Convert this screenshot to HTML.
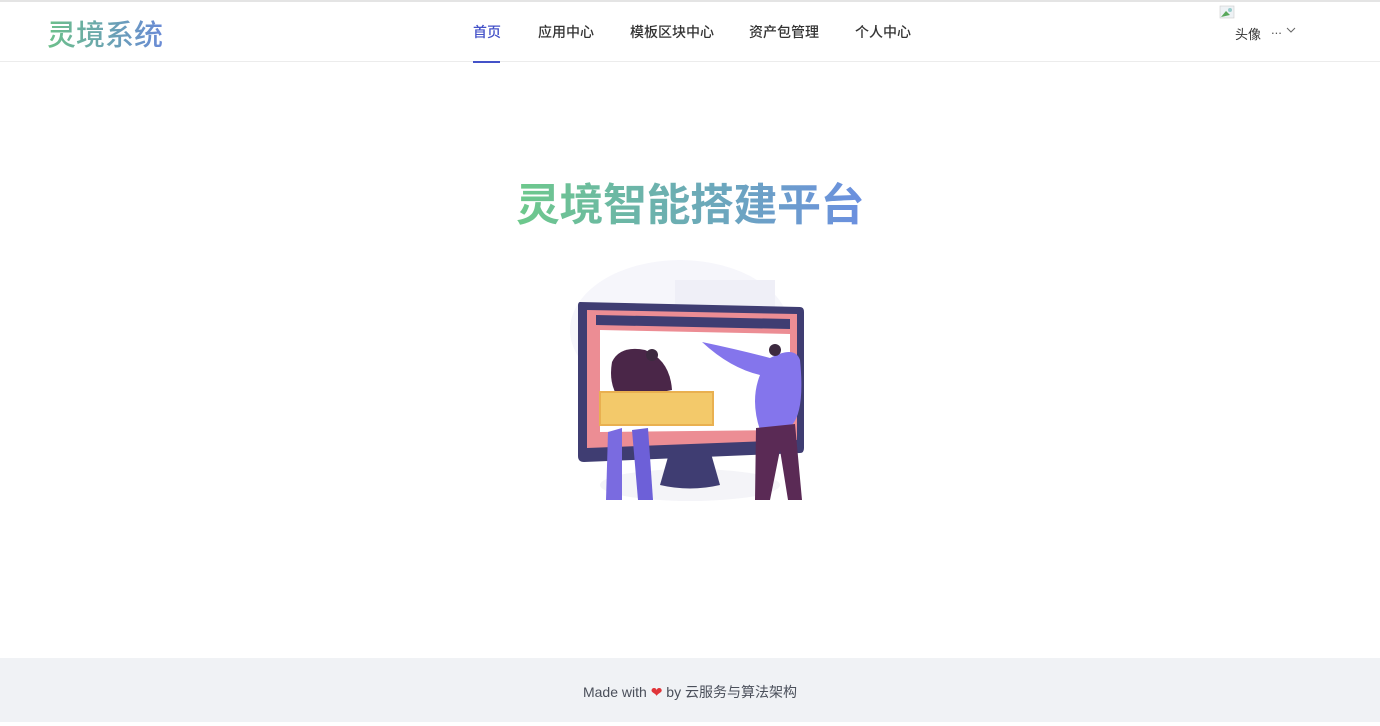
<!DOCTYPE html>
<html><head><meta charset="utf-8"><style>
*{margin:0;padding:0;box-sizing:border-box}
body{width:1380px;height:722px;background:#fff;font-family:"Liberation Sans","Noto Sans CJK SC",sans-serif;position:relative;overflow:hidden}
.top{position:absolute;left:0;top:0;width:1380px;height:2px;background:#e4e4e4}
.hdr{position:absolute;left:0;top:2px;width:1380px;height:60px;border-bottom:1px solid #ececec}
.logo{position:absolute;left:47px;top:10px;font-size:29px;font-weight:500;background:linear-gradient(90deg,#6cc08a,#6a8ad6);-webkit-background-clip:text;color:transparent}
.nav{position:absolute;top:20px;font-size:14px;color:#333;font-weight:500}
.act{color:#4452c8}
.ul{position:absolute;left:473px;top:59px;width:27px;height:2px;background:#4452c8}
.title{position:absolute;left:516px;top:169px;font-size:44px;font-weight:700;background:linear-gradient(90deg,#6dc98b,#6b8fe0);-webkit-background-clip:text;color:transparent;letter-spacing:-0.5px}
.foot{position:absolute;left:0;top:658px;width:1380px;height:64px;background:#f0f2f5;text-align:center;font-size:14px;color:#4a4f5a;line-height:68px}
</style></head><body>
<div class="top"></div>
<div class="hdr">
<div class="logo">灵境系统</div>
<div class="nav act" style="left:473px">首页</div>
<div class="nav" style="left:538px">应用中心</div>
<div class="nav" style="left:630px">模板区块中心</div>
<div class="nav" style="left:749px">资产包管理</div>
<div class="nav" style="left:855px">个人中心</div>
<div class="ul"></div>
<svg style="position:absolute;left:1219px;top:2px" width="18" height="16"><rect x="1" y="2" width="14" height="12" fill="#eef2f5" stroke="#ccc" stroke-width="0.6"/><path d="M2 13 L7 7 L11 11 Z" fill="#59a85c"/><circle cx="11" cy="6" r="2" fill="#9cc"/></svg>
<div style="position:absolute;left:1235px;top:22px;font-size:13px;color:#333">头像</div>
<div style="position:absolute;left:1271px;top:20px;font-size:13px;color:#555">...</div>
<svg style="position:absolute;left:1286px;top:24px" width="10" height="8"><path d="M1 2 L5 6 L9 2" fill="none" stroke="#666" stroke-width="1"/></svg>
</div>
<div class="title">灵境智能搭建平台</div>
<svg style="position:absolute;left:560px;top:250px" width="260" height="260" viewBox="0 0 260 260">
<ellipse cx="120" cy="80" rx="110" ry="70" fill="#f6f6fb"/>
<rect x="115" y="30" width="100" height="40" fill="#efeff7"/>
<ellipse cx="130" cy="235" rx="90" ry="16" fill="#f4f4f8"/>
<path d="M20 52 L240 57 Q244 57 244 62 L244 198 Q244 203 240 203 L24 212 Q18 212 18 206 L18 56 Q18 52 20 52Z" fill="#3f3d72"/>
<path d="M27 60 L237 64 L237 190 L27 198Z" fill="#ec8d94"/>
<path d="M36 65 L230 69 L230 79 L36 75Z" fill="#3f3d72"/>
<path d="M40 80 L230 84 L230 180 L40 182Z" fill="#fff"/>
<path d="M110 200 L150 200 L160 235 Q130 242 100 235Z" fill="#3f3d72"/>
<path d="M52 112 Q60 95 85 100 Q110 110 112 140 L60 150 Q48 135 52 112Z" fill="#4a2648"/>
<rect x="40" y="142" width="113" height="33" fill="#f3c96a" stroke="#e9b050" stroke-width="2"/>
<path d="M48 182 L62 178 L62 250 L46 250Z" fill="#7a6be0"/>
<path d="M72 180 L88 178 L93 250 L78 250Z" fill="#6d60d8"/>
<circle cx="92" cy="105" r="6" fill="#3d2a40"/>
<path d="M142 92 Q180 100 210 108 Q235 95 240 110 Q245 160 232 175 L200 180 Q190 150 200 125 Q170 118 142 92Z" fill="#8475ec"/>
<circle cx="215" cy="100" r="6" fill="#3d2a40"/>
<path d="M196 178 L235 174 L242 250 L228 250 L220 200 L210 250 L195 250Z" fill="#5a2a55"/>
</svg>
<div class="foot">Made with <span style="color:#e0353a">❤</span> by 云服务与算法架构</div>
</body></html>
